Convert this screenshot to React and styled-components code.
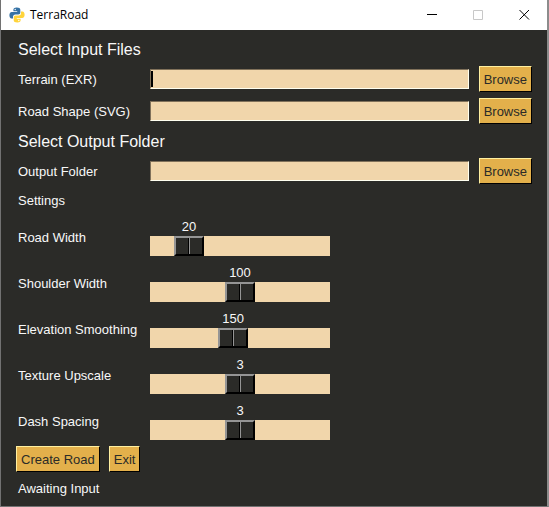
import React, { useId, useState } from "react";
import styled, { createGlobalStyle, css } from "styled-components";

const color = {
  background: "#2b2b28",
  text: "#f8f8f8",
  input: "#f1d6ab",
  button: "#e3b04b",
};

const GlobalStyle = createGlobalStyle`
  *, *::before, *::after { box-sizing: border-box; }
  body {
    margin: 0;
    background: ${color.background};
    font: 13px/16px "Liberation Sans", Arial, sans-serif;
    color: ${color.text};
  }
`;

const Window = styled.div`
  display: flex;
  flex-direction: column;
  min-height: 100vh;
  background: ${color.background};
  border: solid #727272;
  border-width: 0 2px 1px 1px;
  border-right-color: #8c8c8c;
`;

const TitleBar = styled.header`
  display: flex;
  align-items: center;
  height: 30px;
  padding-left: 8px;
  background: #fff;
  color: #000;
`;

const Title = styled.h1`
  flex: 1;
  margin: 0 0 0 5px;
  font: 12px/16px "Open Sans", "Noto Sans", sans-serif;
`;

const CaptionButton = styled.button`
  display: grid;
  place-items: center;
  width: 46px;
  height: 28px;
  padding: 0;
  border: 0;
  background: none;
  color: #000;

  &:disabled {
    color: #c8c8c8;
  }
`;

const Body = styled.main`
  display: flex;
  flex-direction: column;
  padding: 10px 15px 8px;
`;

const Heading = styled.h2`
  margin: 0;
  padding: 0 2px;
  font-size: 16px;
  font-weight: 400;
  line-height: 20px;
`;

const Note = styled.p`
  margin: 0;
  padding: 0 2px;
  line-height: 18px;
`;

const FileRows = styled.div`
  display: flex;
  flex-direction: column;
  gap: 6px;
  margin: 6px 0 8px;
`;

const FileRow = styled.div`
  display: flex;
  align-items: center;
`;

const Label = styled.label`
  flex: none;
  width: 134px;
  padding-left: 2px;
`;

const FileLabel = styled(Label)`
  padding-top: 2px;
`;

const PathInput = styled.input`
  flex: 1;
  min-width: 0;
  height: 20px;
  margin-right: 10px;
  padding: 0 2px;
  border: 1px solid;
  border-color: #80715a #fffff0 #fffff0 #80715a;
  border-radius: 0;
  background: ${color.input};
  color: ${color.background};
  font: inherit;
  outline: none;
`;

const Field = styled.div`
  display: flex;
  flex: 1;
  min-width: 0;
  align-items: center;
  position: relative;
`;

const Caret = styled.span`
  position: absolute;
  left: 1px;
  width: 2px;
  height: 16px;
  background: #000;
`;

const Button = styled.button`
  flex: none;
  height: 26px;
  padding: 2px 4px 0;
  border: 1px solid;
  border-color: #fff0a0 #000 #000 #fff0a0;
  border-radius: 0;
  background: ${color.button};
  color: ${color.background};
  font: inherit;
`;

const SliderRows = styled.div`
  display: flex;
  flex-direction: column;
  gap: 9px;
  margin: 9px 0 6px;
`;

const SliderRow = styled.div`
  display: flex;
  align-items: center;
`;

const Scale = styled.div`
  width: 180px;
`;

const Value = styled.output`
  display: block;
  width: 30px;
  height: 17px;
  text-align: center;
`;

const thumb = css`
  appearance: none;
  width: 30px;
  height: 20px;
  border: 2px solid;
  border-color: #959595 #000 #000 #959595;
  border-radius: 0;
  background: linear-gradient(
    to right,
    ${color.background} 12px,
    #000 12px 13px,
    #959595 13px 14px,
    ${color.background} 14px
  );
`;

const Range = styled.input`
  display: block;
  appearance: none;
  width: 100%;
  height: 20px;
  margin: 0;
  background: ${color.input};

  &::-webkit-slider-thumb {
    ${thumb}
  }
  &::-moz-range-thumb {
    ${thumb}
  }
`;

const Actions = styled.div`
  display: flex;
  gap: 9px;
  margin-bottom: 8px;
`;

function PythonIcon() {
  return (
    <svg width="16" height="16" viewBox="0 0 16 16" aria-hidden="true">
      <path
        fill="#3572a5"
        d="M7.8.5C5 .5 4.400 1.600 4.400 2.700V4.300H8.200V5H2.800C1.200 5 .4 6.300.4 8.200S1.200 11.500 2.500 11.500H4V9.700C4 8.400 5 7.400 6.300 7.400H9.300C10.500 7.400 11.300 6.500 11.300 5.400V2.700C11.300 1.200 10 .5 7.800.5Z"
      />
      <path
        fill="#ffd43b"
        d="M8.200 15.500C11 15.500 11.600 14.400 11.600 13.300V11.700H7.800V11H13.200C14.800 11 15.600 9.700 15.600 7.800S14.800 4.500 13.500 4.500H12V6.300C12 7.600 11 8.600 9.700 8.600H6.700C5.500 8.600 4.700 9.500 4.700 10.600V13.300C4.700 14.800 6 15.500 8.200 15.500Z"
      />
      <circle cx="6.200" cy="2.500" r=".7" fill="#fff" />
      <circle cx="9.800" cy="13.500" r=".7" fill="#fff" />
    </svg>
  );
}

function CaptionIcon({ children }) {
  return (
    <svg width="11" height="11" viewBox="0 0 11 11" fill="none" stroke="currentColor" aria-hidden="true">
      {children}
    </svg>
  );
}

function FileField({ label, active }) {
  const id = useId();
  const [path, setPath] = useState("");
  return (
    <FileRow>
      <FileLabel htmlFor={id}>{label}</FileLabel>
      <Field>
        <PathInput id={id} type="text" value={path} onChange={(e) => setPath(e.target.value)} />
        {active && path === "" && <Caret />}
      </Field>
      <Button type="button" aria-label={`Browse ${label}`}>Browse</Button>
    </FileRow>
  );
}

function SliderField({ label, min, max, initial }) {
  const id = useId();
  const [value, setValue] = useState(initial);
  const ratio = (value - min) / (max - min);
  return (
    <SliderRow>
      <Label htmlFor={id}>{label}</Label>
      <Scale>
        <Value htmlFor={id} style={{ marginLeft: `calc((100% - 30px) * ${ratio})` }}>
          {value}
        </Value>
        <Range
          id={id}
          type="range"
          min={min}
          max={max}
          value={value}
          onChange={(e) => setValue(Number(e.target.value))}
        />
      </Scale>
    </SliderRow>
  );
}

const settings = [
  { label: "Road Width", min: 0, max: 125, initial: 20 },
  { label: "Shoulder Width", min: 0, max: 200, initial: 100 },
  { label: "Elevation Smoothing", min: 0, max: 330, initial: 150 },
  { label: "Texture Upscale", min: 1, max: 5, initial: 3 },
  { label: "Dash Spacing", min: 1, max: 5, initial: 3 },
];

export default function App() {
  return (
    <>
      <GlobalStyle />
      <Window>
        <TitleBar>
          <PythonIcon />
          <Title>TerraRoad</Title>
          <CaptionButton type="button" aria-label="Minimize">
            <CaptionIcon>
              <path d="M0 4.500H10" />
            </CaptionIcon>
          </CaptionButton>
          <CaptionButton type="button" aria-label="Maximize" disabled>
            <CaptionIcon>
              <path d="M.5.5H9.500V9.500H.5Z" />
            </CaptionIcon>
          </CaptionButton>
          <CaptionButton type="button" aria-label="Close">
            <CaptionIcon>
              <path d="M.5 0L10 9.500M10 0L.5 9.500" />
            </CaptionIcon>
          </CaptionButton>
        </TitleBar>
        <Body>
          <Heading>Select Input Files</Heading>
          <FileRows>
            <FileField label="Terrain (EXR)" active />
            <FileField label="Road Shape (SVG)" />
          </FileRows>
          <Heading>Select Output Folder</Heading>
          <FileRows>
            <FileField label="Output Folder" />
          </FileRows>
          <Note>Settings</Note>
          <SliderRows>
            {settings.map((s) => (
              <SliderField key={s.label} {...s} />
            ))}
          </SliderRows>
          <Actions>
            <Button type="button">Create Road</Button>
            <Button type="button">Exit</Button>
          </Actions>
          <Note role="status">Awaiting Input</Note>
        </Body>
      </Window>
    </>
  );
}
